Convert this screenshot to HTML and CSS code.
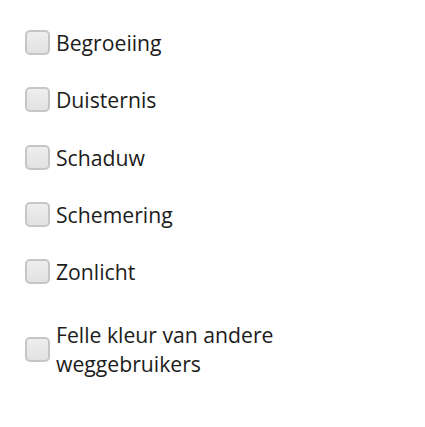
FILE: index.html
```html
<!DOCTYPE html>
<html lang="nl">
<head>
<meta charset="utf-8">
<link rel="stylesheet" href="styles.css">
</head>
<body>
<ul class="options">
  <li class="option"><span class="box"></span><span class="label">Begroeiing</span></li>
  <li class="option"><span class="box"></span><span class="label">Duisternis</span></li>
  <li class="option"><span class="box"></span><span class="label">Schaduw</span></li>
  <li class="option"><span class="box"></span><span class="label">Schemering</span></li>
  <li class="option"><span class="box"></span><span class="label">Zonlicht</span></li>
  <li class="option option-last"><span class="box"></span><span class="label">Felle kleur van andere weggebruikers</span></li>
</ul>
</body>
</html>
```
FILE: styles.css
```css
html, body {
  margin: 0;
  padding: 0;
  background: #ffffff;
}
.options {
  list-style: none;
  margin: 0;
  padding: 28px 0 0 25px;
  display: flex;
  flex-direction: column;
  gap: 28.25px;
  font-family: "Open Sans", "Liberation Sans", sans-serif;
  font-size: 21.2px;
  line-height: 29px;
  color: #1c1c1c;
}
.option {
  display: flex;
  align-items: center;
  gap: 6px;
}
.option-last {
  margin-top: 6px;
}
.box {
  flex: none;
  box-sizing: border-box;
  width: 25px;
  height: 25px;
  border: 2px solid #c6c6c6;
  border-radius: 5px;
  background: linear-gradient(#eeeeee, #e2e2e2);
}
.label {
  width: 250px;
}
```
